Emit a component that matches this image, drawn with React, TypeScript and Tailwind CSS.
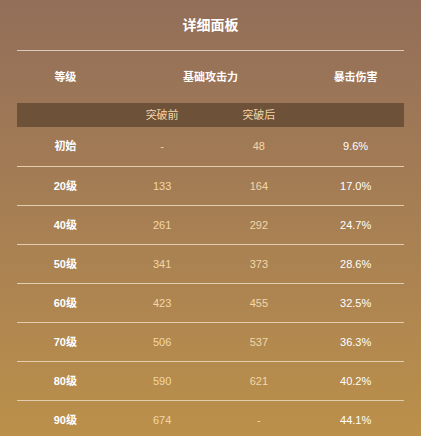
import React from "react";

const rows = [
  ["初始", "-", "48", "9.6%"],
  ["20级", "133", "164", "17.0%"],
  ["40级", "261", "292", "24.7%"],
  ["50级", "341", "373", "28.6%"],
  ["60级", "423", "455", "32.5%"],
  ["70级", "506", "537", "36.3%"],
  ["80级", "590", "621", "40.2%"],
  ["90级", "674", "-", "44.1%"],
];

export default function App() {
  return (
    <div
      className="w-[421px] h-[436px] overflow-hidden bg-gradient-to-b from-[#936e59] to-[#bb904a] px-[17px] text-[11px]"
      style={{ fontFamily: '"Liberation Sans", "Noto Sans CJK SC", sans-serif' }}
    >
      <div className="h-[51px] flex items-center justify-center border-b border-[#dccbbd] text-[14px] font-bold text-white">
        详细面板
      </div>
      <div className="h-[52px] grid grid-cols-4 items-center text-center font-bold text-white">
        <div>等级</div>
        <div className="col-span-2">基础攻击力</div>
        <div>暴击伤害</div>
      </div>
      <div className="h-[24px] grid grid-cols-4 items-center text-center bg-[#6d5139] text-[#f3d7a8]">
        <div></div>
        <div>突破前</div>
        <div>突破后</div>
        <div></div>
      </div>
      {rows.map((r, i) => (
        <div
          key={i}
          className={`${i === 0 ? "h-[40px]" : "h-[39px]"} grid grid-cols-4 items-center text-center ${i < rows.length - 1 ? "border-b border-[#e2cdb0]" : ""}`}
        >
          <div className="font-bold text-white">{r[0]}</div>
          <div className="text-[#f3d7a8]">{r[1]}</div>
          <div className="text-[#f3d7a8]">{r[2]}</div>
          <div className="text-white">{r[3]}</div>
        </div>
      ))}
    </div>
  );
}
